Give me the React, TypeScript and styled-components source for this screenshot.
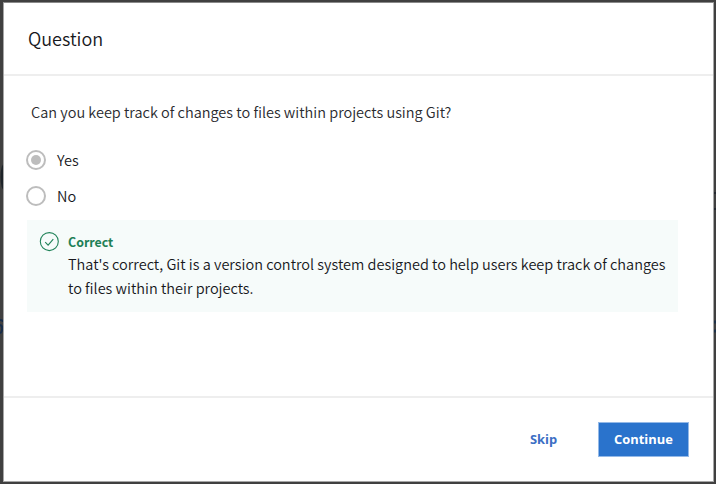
import React from "react";
import styled, { createGlobalStyle } from "styled-components";

const GlobalStyle = createGlobalStyle`
  * { box-sizing: border-box; }
  body { margin: 0; background: #404040; overflow: hidden; }
`;

const Backdrop = styled.div`
  position: relative;
  width: 716px;
  height: 484px;
  padding: 2px 2px 2px 3px;
  background: #404040;
`;

const Behind = styled.svg`
  position: absolute;
  inset: 0;
`;

const Dialog = styled.section`
  position: relative;
  display: flex;
  flex-direction: column;
  height: 480px;
  border: 1px solid #a6a6a6;
  border-top-color: #8a8a8a;
  background: #fff;
  color: #17181c;
  font-family: "Noto Sans CJK SC", "Noto Sans", sans-serif;
  font-weight: 350;
`;

const Header = styled.header`
  display: flex;
  align-items: center;
  height: 73px;
  padding: 0 0 2px 24px;
  border-bottom: 2px solid #eeeeee;
`;

const Title = styled.h1`
  margin: 0;
  font-size: 18px;
  font-weight: 350;
  line-height: 24px;
  white-space: nowrap;
`;

const Body = styled.main`
  flex: 1;
  padding: 24px 34px 0 23px;
`;

const Prompt = styled.p`
  margin: 0 0 0 4px;
  font-size: 14.5px;
  line-height: 24px;
  color: #292a2e;
  white-space: nowrap;
`;

const Options = styled.div`
  display: flex;
  flex-direction: column;
  gap: 12px;
  margin-top: 24px;
`;

const Option = styled.label`
  display: flex;
  align-items: center;
  gap: 11px;
  height: 24px;
  font-size: 14.5px;
  line-height: 24px;
`;

const Radio = styled.span<{ $checked?: boolean }>`
  display: grid;
  place-items: center;
  width: 20px;
  height: 20px;
  margin-left: -1px;
  border: 2px solid #bdbdbd;
  border-radius: 50%;

  &::after {
    content: "";
    width: 10px;
    height: 10px;
    border-radius: 50%;
    background: ${(p) => (p.$checked ? "#bdbdbd" : "transparent")};
  }
`;

const Feedback = styled.div`
  display: flex;
  gap: 8px;
  width: 651px;
  height: 92px;
  margin-top: 12px;
  padding: 12px 0 0 12px;
  background: #f6fbfa;
`;

const Result = styled.div`
  font-size: 12.4px;
  font-weight: 700;
  line-height: 20px;
  color: #1f8057;
`;

const Explanation = styled.p`
  margin: 0;
  font-size: 14.5px;
  line-height: 24px;
  white-space: nowrap;
`;

const Footer = styled.footer`
  display: flex;
  align-items: center;
  justify-content: flex-end;
  gap: 25px;
  height: 85px;
  padding-right: 24px;
  border-top: 2px solid #eeeeee;
`;

const Button = styled.button<{ $primary?: boolean }>`
  width: ${(p) => (p.$primary ? "91px" : "59px")};
  height: 35px;
  padding: 0 0 2px;
  border: 1px solid ${(p) => (p.$primary ? "#94b9e7" : "transparent")};
  background: ${(p) => (p.$primary ? "#2a73cc" : "transparent")};
  color: ${(p) => (p.$primary ? "#fff" : "#3c6fc4")};
  font: 700 12.9px/20px "Open Sans", "Noto Sans", sans-serif;
`;

export default function App() {
  return (
    <>
      <GlobalStyle />
      <Backdrop>
        <Behind width="716" height="484" aria-hidden="true">
          <ellipse cx="4" cy="177" rx="3.5" ry="13" fill="#1d2328" />
          <path d="M0 320q3 0 3 2M0 325q3 1 2 5t-2 2" fill="none" stroke="#172d49" strokeWidth="2" />
          <path d="M714 193h2M714 209h2" stroke="#242931" strokeWidth="2" />
          <path d="M714 322h2M714 331h2" stroke="#1c3148" strokeWidth="3" />
        </Behind>
        <Dialog role="dialog">
          <Header>
            <Title>Question</Title>
          </Header>
          <Body>
            <Prompt>Can you keep track of changes to files within projects using Git?</Prompt>
            <Options role="radiogroup">
              <Option>
                <Radio $checked />
                Yes
              </Option>
              <Option>
                <Radio />
                No
              </Option>
            </Options>
            <Feedback>
              <svg width="21" height="20" viewBox="0 0 21 20" fill="none" stroke="#218359">
                <circle cx="10.3" cy="9.6" r="9" strokeWidth="1.1" />
                <path d="M6.2 10.2l2.9 2.9 5.2-5.9" strokeWidth="1.1" />
              </svg>
              <div>
                <Result>Correct</Result>
                <Explanation>
                  That's correct, Git is a version control system designed to help users keep track of changes
                  <br />
                  to files within their projects.
                </Explanation>
              </div>
            </Feedback>
          </Body>
          <Footer>
            <Button>Skip</Button>
            <Button $primary>Continue</Button>
          </Footer>
        </Dialog>
      </Backdrop>
    </>
  );
}
